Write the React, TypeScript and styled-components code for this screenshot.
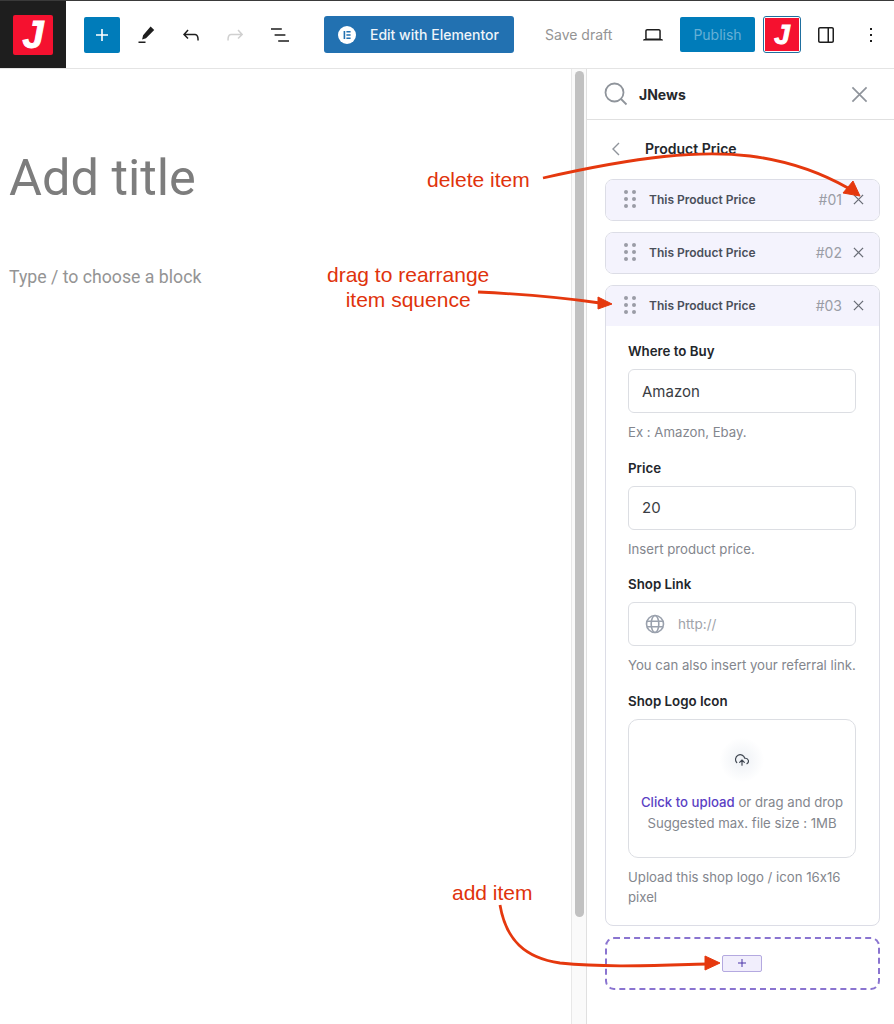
import React from 'react';
import styled, { createGlobalStyle } from 'styled-components';

const GlobalStyle = createGlobalStyle`
  html, body { margin: 0; padding: 0; background: #fff; }
  body { font-family: Inter, "Liberation Sans", sans-serif; font-feature-settings: "calt" 0; }
  * { box-sizing: border-box; }
`;

const Page = styled.div`
  position: relative;
  width: 894px;
  height: 1024px;
  overflow: hidden;
`;

/* top bar */
const TopBar = styled.header`
  display: flex;
  align-items: center;
  height: 69px;
  border-top: 1px solid #3a3a3a;
  border-bottom: 1px solid #e4e4e4;
`;
const LogoCell = styled.div`
  display: flex;
  align-items: center;
  justify-content: center;
  width: 66px;
  height: 100%;
  background: #1e1e1e;
`;
const JMark = styled.span<{ size: number }>`
  display: flex;
  align-items: center;
  justify-content: center;
  width: 100%;
  height: 100%;
  background: #f5112f;
  color: #fff;
  font-family: "Liberation Sans", sans-serif;
  font-weight: 700;
  font-style: italic;
  font-size: ${(p) => p.size}px;
  line-height: 1;
  -webkit-text-stroke: 1px #fff;
`;
const LogoSquare = styled.div`
  width: 40px;
  height: 40px;
  border-radius: 2px;
  overflow: hidden;
`;
const PlusButton = styled.button`
  display: flex;
  align-items: center;
  justify-content: center;
  width: 36px;
  height: 36px;
  margin-left: 18px;
  padding: 0;
  border: 0;
  border-radius: 2px;
  background: #007cba;
  color: #fff;
`;
const IconSlot = styled.div<{ tone?: string; width?: number; gap?: number }>`
  display: flex;
  align-items: center;
  justify-content: center;
  width: ${(p) => p.width ?? 44.5}px;
  height: 36px;
  margin-left: ${(p) => p.gap ?? 0}px;
  color: ${(p) => p.tone ?? '#1e1e1e'};
`;
const Tools = styled.div`
  display: flex;
  margin-left: 4px;
`;
const ElementorButton = styled.button`
  display: flex;
  align-items: center;
  gap: 14px;
  width: 190px;
  height: 37px;
  margin-left: 22px;
  padding: 0 0 0 14px;
  border: 0;
  border-radius: 3px;
  background: #2271b1;
  color: #eef4f9;
  font: 500 14px Inter, sans-serif;
`;
const SaveDraft = styled.span`
  margin-left: 31px;
  width: 68px;
  color: #949494;
  font-size: 14px;
  white-space: nowrap;
`;
const PublishButton = styled.button`
  width: 75px;
  height: 35px;
  margin-left: 7px;
  border: 0;
  border-radius: 2px;
  background: #007cba;
  color: #66b0d6;
  font: 400 14px Inter, sans-serif;
`;
const JToggle = styled.div`
  width: 38px;
  height: 37px;
  margin-left: 8px;
  padding: 1px;
  border: 1.5px solid #1f6f9f;
  border-radius: 3px;
  overflow: hidden;
`;

/* main area */
const Main = styled.main`
  display: grid;
  grid-template-columns: 571px 15px 1fr;
  height: 955px;
`;
const Editor = styled.section`
  padding: 79px 0 0 9px;
`;
const TitlePlaceholder = styled.h1`
  margin: 0;
  color: #7d7d7d;
  font: 400 50.5px/60px Roboto, sans-serif;
`;
const BlockHint = styled.p`
  margin: 59px 0 0;
  color: #949494;
  font: 400 17.7px/20px Roboto, sans-serif;
`;
const ScrollTrack = styled.div`
  padding: 2px 2px 0 3px;
  background: #fafafa;
  border-left: 1px solid #e8e8e8;
`;
const ScrollThumb = styled.div`
  height: 846px;
  border-radius: 5px;
  background: #c1c1c1;
`;

/* sidebar */
const Sidebar = styled.aside`
  border-left: 1px solid #e0e0e0;
`;
const SidebarHead = styled.div`
  display: flex;
  align-items: center;
  height: 51px;
  padding: 0 26px 0 17px;
  border-bottom: 1px solid #e0e0e0;
`;
const BrandName = styled.span`
  flex: 1;
  margin-left: 11px;
  color: #26282c;
  font-size: 14px;
  font-weight: 700;
`;
const BackRow = styled.div`
  display: flex;
  align-items: center;
  height: 59px;
  padding: 0 0 2px 23px;
`;
const BackTitle = styled.span`
  margin-left: 23px;
  color: #24272c;
  font-size: 14px;
  font-weight: 600;
`;
const Items = styled.div`
  display: flex;
  flex-direction: column;
  gap: 11px;
  width: 275px;
  margin-left: 18px;
`;
const ItemCard = styled.div`
  border: 1px solid #dcdde6;
  border-radius: 8px;
  background: #fff;
  overflow: hidden;
`;
const ItemHead = styled.div`
  display: flex;
  align-items: center;
  height: 40px;
  padding: 0 15px 2px 18px;
  background: #f4f3fd;
  color: #4a4f5a;
`;
const ItemName = styled.span`
  flex: 1;
  margin-left: 13px;
  font-size: 12px;
  font-weight: 600;
`;
const ItemNumber = styled.span`
  margin-right: 11px;
  color: #9a9da6;
  font-size: 14px;
`;
const ItemForm = styled.div`
  padding: 17px 23px 18.5px 22px;
`;
const Field = styled.div`
  margin-bottom: 17.5px;
`;
const FieldLabel = styled.div`
  color: #23262b;
  font-size: 13.3px;
  font-weight: 600;
  line-height: 17px;
  margin-bottom: 9px;
`;
const TextInput = styled.div`
  display: flex;
  align-items: center;
  gap: 13px;
  height: 44px;
  padding: 0 13px;
  border: 1px solid #dcdee3;
  border-radius: 6px;
  color: #3a3d43;
  font-size: 15px;
`;
const LinkInput = styled(TextInput)`
  padding-left: 16px;
`;
const Placeholder = styled.span`
  color: #a0a3aa;
  font-size: 13.5px;
`;
const HelpText = styled.div`
  margin-top: 9px;
  color: #83868d;
  font-size: 13.2px;
  line-height: 20px;
`;
const Dropzone = styled.div`
  display: flex;
  flex-direction: column;
  align-items: center;
  height: 139px;
  padding-top: 18px;
  border: 1px solid #dcdee3;
  border-radius: 10px;
  color: #83868d;
  font-size: 13.2px;
  line-height: 21px;
  white-space: nowrap;
`;
const UploadHalo = styled.div`
  display: flex;
  align-items: center;
  justify-content: center;
  width: 44px;
  height: 44px;
  margin-bottom: 10px;
  border-radius: 50%;
  background: radial-gradient(circle, #eef1f5 0%, #ffffff 72%);
  color: #3f4650;
`;
const UploadLink = styled.span`
  color: #5b3fc4;
  font-weight: 500;
`;
const AddBox = styled.div`
  display: flex;
  align-items: center;
  justify-content: center;
  height: 53px;
  border: 2px dashed #8a74d0;
  border-radius: 9px;
`;
const AddButton = styled.button`
  display: flex;
  align-items: center;
  justify-content: center;
  width: 40px;
  height: 17px;
  margin: 0 1px 1px 0;
  padding: 0;
  border: 1px solid #b4a9e0;
  border-radius: 2px;
  background: #f1eefc;
  color: #4b34a8;
`;

/* annotations drawn over the page */
const ArrowLayer = styled.svg`
  position: absolute;
  inset: 0;
  width: 894px;
  height: 1024px;
  pointer-events: none;
`;
const Note = styled.div<{ x: number; y: number }>`
  position: absolute;
  left: ${(p) => p.x}px;
  top: ${(p) => p.y}px;
  color: #e0330c;
  font: 400 21px/25px "Liberation Sans", sans-serif;
  text-align: center;
  white-space: nowrap;
`;

const Glyph = ({ d, size = 24 }: { d: string; size?: number }) => (
  <svg width={size} height={size} viewBox="0 0 24 24" fill="currentColor">
    <path d={d} />
  </svg>
);

const Cross = ({ size, color, weight = 1.4 }: { size: number; color: string; weight?: number }) => (
  <svg width={size} height={size} viewBox="0 0 12 12" fill="none" stroke={color} strokeWidth={weight}>
    <path d="M1 1l10 10M11 1L1 11" />
  </svg>
);

const DragDots = () => (
  <svg width="12" height="18" viewBox="0 0 12 18" fill="#9a9ca6">
    {[2, 9, 16].map((y) => (
      <React.Fragment key={y}>
        <circle cx="2" cy={y} r="2" />
        <circle cx="10" cy={y} r="2" />
      </React.Fragment>
    ))}
  </svg>
);

const Item = ({ num }: { num: string }) => (
  <ItemHead>
    <DragDots />
    <ItemName>This Product Price</ItemName>
    <ItemNumber>{num}</ItemNumber>
    <Cross size={11} color="#6b6f78" />
  </ItemHead>
);

const App = () => (
  <Page>
    <GlobalStyle />
    <TopBar>
      <LogoCell>
        <LogoSquare>
          <JMark size={38}>J</JMark>
        </LogoSquare>
      </LogoCell>
      <PlusButton>
        <Glyph d="M18 11.2h-5.2V6h-1.6v5.2H6v1.6h5.2V18h1.6v-5.2H18z" />
      </PlusButton>
      <Tools>
        <IconSlot>
          <Glyph d="M16.6 3.6l3.6 3.4-8.2 8.3-3.9 1.2 1-4.3zM4.5 18.6h7v1.4h-7z" />
        </IconSlot>
        <IconSlot>
          <Glyph d="M18.3 11.7c-.6-.6-1.4-.9-2.3-.9H6.7l2.9-3.3-1.1-1-4.5 5L8.5 16l1-1-2.7-2.7H16c.5 0 .9.2 1.3.5 1 1 1 3.4 1 4.5v.3h1.5v-.2c0-1.5 0-4.3-1.5-5.7z" />
        </IconSlot>
        <IconSlot tone="#d0d0d0">
          <Glyph d="M15.6 6.5l-1.1 1 2.9 3.3H8c-.9 0-1.7.3-2.3.9-1.4 1.5-1.4 4.2-1.4 5.6v.2h1.5v-.3c0-1.1 0-3.5 1-4.5.3-.3.7-.5 1.3-.5h9.2L14.5 15l1.1 1.1 4.6-4.6-4.6-5z" />
        </IconSlot>
        <IconSlot>
          <Glyph d="M13.8 5.2H3v1.5h10.8V5.2zm-3.6 12v1.5H21v-1.5H10.2zm7.2-6H6.6v1.5h10.8v-1.5z" />
        </IconSlot>
      </Tools>
      <ElementorButton>
        <svg width="18" height="18" viewBox="0 0 18 18">
          <circle cx="9" cy="9" r="9" fill="#fff" />
          <path d="M5.6 5h1.6v8H5.6zM8.4 5h4.2v1.6H8.4zM8.4 8.2h4.2v1.6H8.4zM8.4 11.4h4.2V13H8.4z" fill="#2271b1" />
        </svg>
        Edit with Elementor
      </ElementorButton>
      <SaveDraft>Save draft</SaveDraft>
      <IconSlot width={40} gap={20}>
        <Glyph d="M20.5 16h-.7V8c0-1.1-.9-2-2-2H6.2c-1.1 0-2 .9-2 2v8h-.7c-.8 0-1.5.7-1.5 1.5h20c0-.8-.7-1.5-1.5-1.5zM5.7 8c0-.3.2-.5.5-.5h11.6c.3 0 .5.2.5.5v7.6H5.7V8z" />
      </IconSlot>
      <PublishButton>Publish</PublishButton>
      <JToggle>
        <JMark size={28}>J</JMark>
      </JToggle>
      <IconSlot width={50}>
        <Glyph d="M18 4H6c-1.1 0-2 .9-2 2v12c0 1.1.9 2 2 2h12c1.1 0 2-.9 2-2V6c0-1.1-.9-2-2-2zm.5 14c0 .3-.2.5-.5.5h-3v-13h3c.3 0 .5.2.5.5v12zM13.5 18.5H6c-.3 0-.5-.2-.5-.5V6c0-.3.2-.5.5-.5h7.5v13z" />
      </IconSlot>
      <IconSlot width={40}>
        <Glyph d="M13 19h-2v-2h2v2zm0-6h-2v-2h2v2zm0-6h-2V5h2v2z" />
      </IconSlot>
    </TopBar>

    <Main>
      <Editor>
        <TitlePlaceholder>Add title</TitlePlaceholder>
        <BlockHint>Type / to choose a block</BlockHint>
      </Editor>
      <ScrollTrack>
        <ScrollThumb />
      </ScrollTrack>
      <Sidebar>
        <SidebarHead>
          <svg width="24" height="24" viewBox="0 0 24 24" fill="none" stroke="#8f949b" strokeWidth="1.8">
            <circle cx="10.5" cy="10.5" r="9" />
            <path d="M17 17l5.5 5.5" />
          </svg>
          <BrandName>JNews</BrandName>
          <Cross size={17} color="#8f949b" weight={1.2} />
        </SidebarHead>
        <BackRow>
          <svg width="12" height="14" viewBox="0 0 12 14" fill="none" stroke="#8f949b" strokeWidth="1.4">
            <path d="M9 1L3 7l6 6" />
          </svg>
          <BackTitle>Product Price</BackTitle>
        </BackRow>
        <Items>
          <ItemCard>
            <Item num="#01" />
          </ItemCard>
          <ItemCard>
            <Item num="#02" />
          </ItemCard>
          <ItemCard>
            <Item num="#03" />
            <ItemForm>
              <Field>
                <FieldLabel>Where to Buy</FieldLabel>
                <TextInput>Amazon</TextInput>
                <HelpText>Ex : Amazon, Ebay.</HelpText>
              </Field>
              <Field>
                <FieldLabel>Price</FieldLabel>
                <TextInput>20</TextInput>
                <HelpText>Insert product price.</HelpText>
              </Field>
              <Field>
                <FieldLabel>Shop Link</FieldLabel>
                <LinkInput>
                  <svg width="20" height="20" viewBox="0 0 20 20" fill="none" stroke="#9aa1ad" strokeWidth="1.6">
                    <circle cx="10" cy="10" r="8.5" />
                    <ellipse cx="10" cy="10" rx="3.8" ry="8.5" />
                    <path d="M2 7.2h16M2 12.8h16" />
                  </svg>
                  <Placeholder>http://</Placeholder>
                </LinkInput>
                <HelpText>You can also insert your referral link.</HelpText>
              </Field>
              <FieldLabel>Shop Logo Icon</FieldLabel>
              <Dropzone>
                <UploadHalo>
                  <svg width="14" height="14" viewBox="0 0 24 24" fill="none" stroke="currentColor" strokeWidth="2" strokeLinecap="round" strokeLinejoin="round">
                    <path d="M16 16l-4-4-4 4M12 12v9" />
                    <path d="M20.4 18.4A5 5 0 0 0 18 9h-1.3A8 8 0 1 0 3 16.3" />
                  </svg>
                </UploadHalo>
                <div>
                  <UploadLink>Click to upload</UploadLink> or drag and drop
                </div>
                <div>Suggested max. file size : 1MB</div>
              </Dropzone>
              <HelpText>Upload this shop logo / icon 16x16 pixel</HelpText>
            </ItemForm>
          </ItemCard>
          <AddBox>
            <AddButton>
              <svg width="10" height="10" viewBox="0 0 10 10" stroke="currentColor" strokeWidth="1">
                <path d="M5 1v8M1 5h8" />
              </svg>
            </AddButton>
          </AddBox>
        </Items>
      </Sidebar>
    </Main>

    <Note x={427} y={167}>delete item</Note>
    <Note x={327} y={262}>
      drag to rearrange
      <br />
      item squence
    </Note>
    <Note x={452} y={880}>add item</Note>
    <ArrowLayer viewBox="0 0 894 1024" fill="none" stroke="#e5380e" strokeWidth="2.8">
      <path d="M543 178C640 156 700 150 750 156C790 161 825 175 848 188" />
      <path d="M843 193L853 181L860 196Z" fill="#e5380e" strokeWidth="1" />
      <path d="M478 292C520 294 565 298 600 303" />
      <path d="M598 297L612 304L598 309Z" fill="#e5380e" strokeWidth="1" />
      <path d="M500 905C506 940 525 958 560 963C610 968 660 965 708 964" />
      <path d="M705 956L720 963L705 970Z" fill="#e5380e" strokeWidth="1" />
    </ArrowLayer>
  </Page>
);

export default App;
